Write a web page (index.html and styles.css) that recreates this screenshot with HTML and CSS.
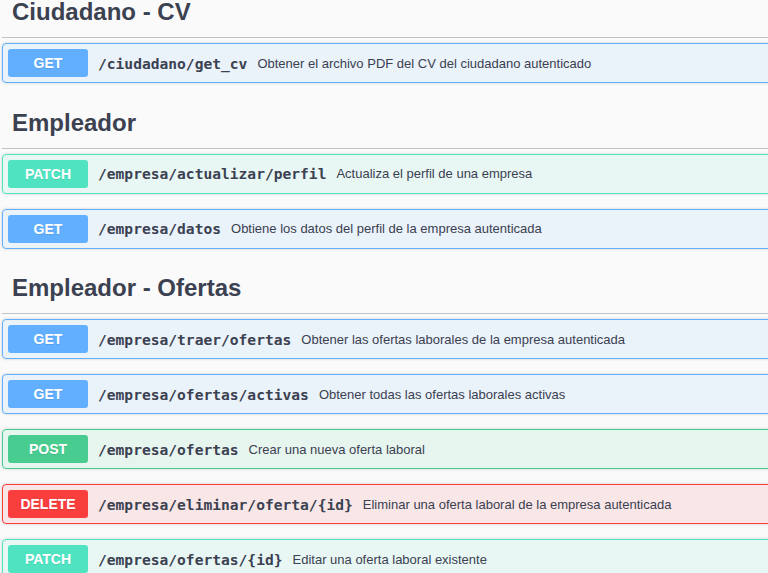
FILE: index.html
```html
<!DOCTYPE html>
<html lang="es">
<head>
<meta charset="utf-8">
<title>API</title>
<link rel="stylesheet" href="styles.css">
</head>
<body>
<div class="wrapper">
  <section class="tag-section">
    <h3 class="tag">Ciudadano - CV</h3>
    <div class="ops">
      <div class="opblock get"><span class="method">GET</span><span class="path">/ciudadano/get_cv</span><span class="desc">Obtener el archivo PDF del CV del ciudadano autenticado</span></div>
    </div>
  </section>
  <section class="tag-section">
    <h3 class="tag">Empleador</h3>
    <div class="ops">
      <div class="opblock patch"><span class="method">PATCH</span><span class="path">/empresa/actualizar/perfil</span><span class="desc">Actualiza el perfil de una empresa</span></div>
      <div class="opblock get"><span class="method">GET</span><span class="path">/empresa/datos</span><span class="desc">Obtiene los datos del perfil de la empresa autenticada</span></div>
    </div>
  </section>
  <section class="tag-section">
    <h3 class="tag">Empleador - Ofertas</h3>
    <div class="ops">
      <div class="opblock get"><span class="method">GET</span><span class="path">/empresa/traer/ofertas</span><span class="desc">Obtener las ofertas laborales de la empresa autenticada</span></div>
      <div class="opblock get"><span class="method">GET</span><span class="path">/empresa/ofertas/activas</span><span class="desc">Obtener todas las ofertas laborales activas</span></div>
      <div class="opblock post"><span class="method">POST</span><span class="path">/empresa/ofertas</span><span class="desc">Crear una nueva oferta laboral</span></div>
      <div class="opblock delete"><span class="method">DELETE</span><span class="path">/empresa/eliminar/oferta/{id}</span><span class="desc">Eliminar una oferta laboral de la empresa autenticada</span></div>
      <div class="opblock patch"><span class="method">PATCH</span><span class="path">/empresa/ofertas/{id}</span><span class="desc">Editar una oferta laboral existente</span></div>
    </div>
  </section>
</div>
</body>
</html>
```
FILE: styles.css
```css
html, body {
  margin: 0;
  padding: 0;
  background: #fafafa;
  overflow: hidden;
}
body {
  font-family: "Liberation Sans", Arial, sans-serif;
  color: #3b4151;
}
.wrapper {
  margin: -12.5px 0 0 2px;
  width: 820px;
}
.tag-section {
  margin-bottom: 0;
}
.tag {
  margin: 0 0 5px;
  height: 50.5px;
  box-sizing: border-box;
  padding: 0 20px 0 10px;
  display: flex;
  align-items: center;
  font-size: 24px;
  font-weight: bold;
  color: #3b4151;
  border-bottom: 1px solid rgba(59, 65, 81, 0.3);
}
.opblock {
  display: flex;
  align-items: center;
  padding: 5px;
  margin: 0 0 15px;
  border: 1px solid #000;
  border-radius: 4px;
  box-shadow: 0 0 3px rgba(0, 0, 0, 0.19);
}
.method {
  min-width: 80px;
  padding: 6px 0;
  text-align: center;
  font-size: 14px;
  line-height: 16px;
  font-weight: bold;
  color: #fff;
  border-radius: 3px;
  text-shadow: 0 1px 0 rgba(0, 0, 0, 0.1);
}
.path {
  padding: 0 10px;
  font-family: "DejaVu Sans Mono", monospace;
  font-weight: bold;
  font-size: 14.6px;
  color: #3b4151;
}
.desc {
  font-size: 13px;
  color: #3b4151;
}
.get { background: rgba(97, 175, 254, 0.1); border-color: #61affe; }
.get .method { background: #61affe; }
.post { background: rgba(73, 204, 144, 0.1); border-color: #49cc90; }
.post .method { background: #49cc90; }
.delete { background: rgba(249, 62, 62, 0.1); border-color: #f93e3e; }
.delete .method { background: #f93e3e; }
.patch { background: rgba(80, 227, 194, 0.1); border-color: #50e3c2; }
.patch .method { background: #50e3c2; }
```
